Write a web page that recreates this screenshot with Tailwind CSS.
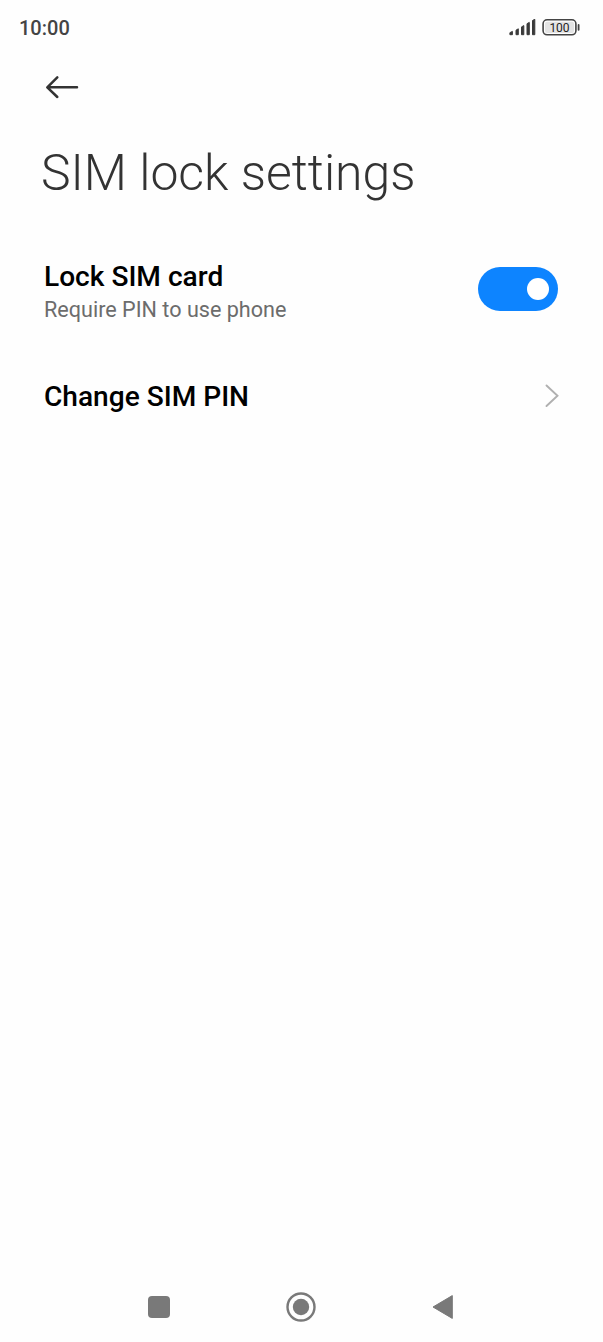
<!DOCTYPE html>
<html lang="en">
<head>
<meta charset="utf-8">
<title>SIM lock settings</title>
<script src="https://cdn.jsdelivr.net/npm/@tailwindcss/browser@4"></script>
</head>
<body class="bg-[#fefefe] font-['Roboto',sans-serif]">
<div class="flex h-[1342px] w-[603px] flex-col overflow-hidden">
  <header class="flex h-14 items-center justify-between pl-[19px] pr-[23px]">
    <span class="text-[20px] font-medium leading-none text-[#444]">10:00</span>
    <div class="flex items-center gap-[6px]">
      <svg class="h-[18px] w-[28px]" viewBox="0 0 28 18" fill="#3a3a3a" stroke="#3a3a3a" stroke-width="1" stroke-linejoin="round"><path d="M1.900 15.700v-2l2.500-1.300v3.300zM8 15.700v-4.500l2.300-1.400v5.900zM13.500 15.700V7.900l2.300-1.300v9.100zM19 15.700V4.700l2.300-1.300v12.300zM24.500 15.700V1.500l2.300-1.200v15.400z"/></svg>
      <svg class="h-[18px] w-[38px]" viewBox="0 0 38 18"><rect x="1.100" y=".8" width="32.800" height="15" rx="4" fill="#fefefe" stroke="#444" stroke-width="1.600"/><rect x="3" y="2.700" width="29" height="11.200" rx="2" fill="#e4e4e4"/><path d="M36.600 6v4.800" stroke="#444" stroke-width="1.800" stroke-linecap="round"/><text x="17.500" y="12.700" text-anchor="middle" font-size="12" font-weight="400" fill="#222">100</text></svg>
    </div>
  </header>
  <button class="ml-[45px] mt-[19px] h-6 w-[34px]" aria-label="Back"><svg class="h-6 w-[34px]" viewBox="0 0 34 24" fill="none" stroke="#333" stroke-width="2.500" stroke-linecap="round" stroke-linejoin="round"><path d="M32 12.300H2.500M12.300 2.300 2.300 12.300 12.300 22"/></svg></button>
  <h1 class="ml-[41px] mt-[44px] text-[49.900px] font-light leading-[60px] text-[#333]">SIM lock settings</h1>
  <main class="mt-[56px] flex flex-col gap-[54px] pl-11 pr-[45px]">
    <div class="flex items-start justify-between">
      <div>
        <h2 class="text-[28.100px] font-medium leading-9 text-black">Lock SIM card</h2>
        <p class="text-[21.600px] leading-[30px] text-[#6c6c6c]">Require PIN to use phone</p>
      </div>
      <div class="mt-[8px] flex h-11 w-20 items-center justify-end rounded-full bg-[#0d84ff] pr-[9px]"><div class="size-[22px] rounded-full bg-white"></div></div>
    </div>
    <div class="-mr-px flex items-start justify-between">
      <h2 class="text-[28.100px] font-medium leading-9 text-black">Change SIM PIN</h2>
      <svg class="mt-[5px] h-6 w-[14px]" viewBox="0 0 14 24" fill="none" stroke="#b0b0b0" stroke-width="1.900" stroke-linecap="round"><path d="M1.500 1.500 12.500 11.800 1.500 22"/></svg>
    </div>
  </main>
  <nav class="mt-auto flex h-[70px] items-center pl-[148px]">
    <div class="size-[22px] rounded bg-[#797979]"></div>
    <svg class="ml-[116px] size-[30px]" viewBox="0 0 30 30"><circle cx="15" cy="15" r="13.500" fill="none" stroke="#797979" stroke-width="2.400"/><circle cx="15" cy="15" r="8.200" fill="#797979"/></svg>
    <svg class="ml-[116px] h-[26px] w-[22px]" viewBox="0 0 22 26"><path d="M20.300 1.600v22.800L1 13z" fill="#797979" stroke="#797979" stroke-linejoin="round"/></svg>
  </nav>
</div>
</body>
</html>
